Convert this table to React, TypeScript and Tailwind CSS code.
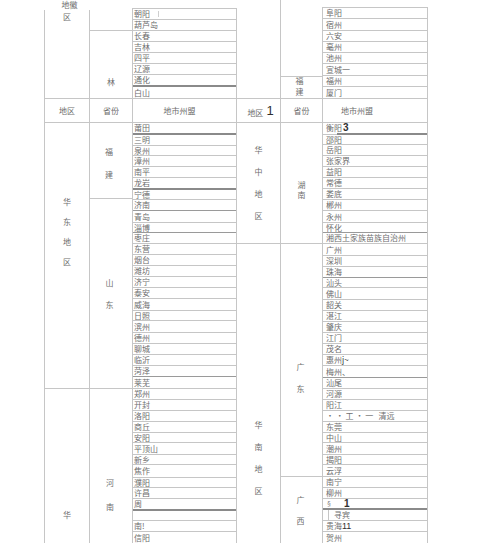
import React from "react";

type Row = { t: React.ReactNode; c: string };

const L = "border-[#c6c6c6]";
const h10 = "h-[10px] border-b border-[#c6c6c6]";
const h11 = "h-[11px] border-b border-[#c6c6c6]";
const h12 = "h-[12px] border-b border-[#c6c6c6]";
const h13 = "h-[13px] border-b border-[#c6c6c6]";
const d10 = "h-[10px] border-b border-[#9a9a9a]";
const d11 = "h-[11px] border-b border-[#9a9a9a]";
const d12 = "h-[12px] border-b border-[#9a9a9a]";
const t12 = "h-[12px] border-b-2 border-[#8a8a8a]";
const t11 = "h-[11px] border-b-2 border-[#8a8a8a]";

const Big = ({ children, cls }: { children: React.ReactNode; cls: string }) => (
  <span className={`font-['Liberation_Sans',sans-serif] text-[#2f2f2f] ${cls}`}>{children}</span>
);

const leftTop: Row[] = [
  {
    t: (
      <>
        朝阳<span className="ml-[8px] h-[6px] w-px bg-[#cfcfcf]" />
      </>
    ),
    c: h11,
  },
  { t: "葫芦岛", c: h11 },
  { t: "长春", c: h11 },
  { t: "吉林", c: h11 },
  { t: "四平", c: h11 },
  { t: "辽源", c: h11 },
  { t: "通化", c: t12 },
  { t: "白山", c: h12 },
];

const leftMain: Row[] = [
  { t: "莆田", c: t12 },
  { t: "三明", c: h11 },
  { t: "泉州", c: h10 },
  { t: "漳州", c: h11 },
  { t: "南平", c: h11 },
  { t: "龙岩", c: t12 },
  { t: "宁德", c: h10 },
  { t: "济南", c: d11 },
  { t: "青岛", c: h12 },
  { t: "淄博", c: d10 },
  { t: "枣庄", c: h11 },
  { t: "东营", c: h11 },
  { t: "烟台", c: h11 },
  { t: "潍坊", c: h11 },
  { t: "济宁", c: h11 },
  { t: "泰安", c: h11 },
  { t: "威海", c: h12 },
  { t: "日照", c: h10 },
  { t: "滨州", c: h12 },
  { t: "德州", c: h11 },
  { t: "聊城", c: h11 },
  { t: "临沂", c: h11 },
  { t: "菏泽", c: d11 },
  { t: "莱芜", c: h12 },
  { t: "郑州", c: h11 },
  { t: "开封", c: h11 },
  { t: "洛阳", c: h11 },
  { t: "商丘", c: h11 },
  { t: "安阳", c: h10 },
  { t: "平顶山", c: h12 },
  { t: "新乡", c: h10 },
  { t: "焦作", c: h13 },
  { t: "濮阳", c: h10 },
  { t: "许昌", c: h11 },
  { t: "周", c: t12 },
  { t: "", c: h10 },
  { t: "南!", c: h11 },
  { t: "信阳", c: "h-[11px]" },
];

const rightTop: Row[] = [
  { t: "阜阳", c: h11 },
  { t: "宿州", c: h12 },
  { t: "六安", c: h11 },
  { t: "亳州", c: h11 },
  { t: "池州", c: h11 },
  { t: "宣城一", c: h12 },
  { t: "福州", c: h11 },
  { t: "厦门", c: h12 },
];

const rightMain: Row[] = [
  { t: "__HENGYANG__", c: "h-[12px]" },
  { t: "邵阳", c: h10 },
  { t: "岳阳", c: h11 },
  { t: "张家界", c: h11 },
  { t: "益阳", c: h11 },
  { t: "常德", c: h11 },
  { t: "娄底", c: h11 },
  { t: "郴州", c: h11 },
  { t: "永州", c: h12 },
  { t: "怀化", c: d10 },
  { t: "湘西土家族苗族自治州", c: h11 },
  { t: "广州", c: h12 },
  { t: "深圳", c: h11 },
  { t: "珠海", c: d11 },
  { t: "汕头", c: h10 },
  { t: "佛山", c: h12 },
  { t: "韶关", c: h11 },
  { t: "湛江", c: h11 },
  { t: "肇庆", c: h11 },
  { t: "江门", c: h11 },
  { t: "茂名", c: h11 },
  {
    t: (
      <>
        惠州<span className="text-[#333]">j~</span>
      </>
    ),
    c: h11,
  },
  { t: "梅州、", c: d12 },
  { t: "汕尾", c: h11 },
  { t: "河源", c: h11 },
  { t: "阳江", c: h11 },
  { t: "__QINGYUAN__", c: h11 },
  { t: "东莞", c: h11 },
  { t: "中山", c: h10 },
  { t: "潮州", c: h12 },
  { t: "揭阳", c: h10 },
  { t: "云浮", c: h12 },
  { t: "南宁", c: h11 },
  { t: "柳州", c: h11 },
  { t: "__SECT__", c: t11 },
  { t: "__XUNBIN__", c: h11 },
  {
    t: (
      <>
        贵海<Big cls="text-[9px] leading-[8px]">11</Big>
      </>
    ),
    c: h11,
  },
  { t: "贺州", c: "h-[11px]" },
];

function Cell({ r, pad }: { r: Row; pad: string }) {
  if (r.t === "__HENGYANG__") {
    return (
      <div className="flex h-[12px] flex-col">
        <div className={`flex h-[10px] items-center ${pad}`}>
          衡阳<Big cls="ml-[1px] text-[10px] leading-[8px] font-semibold">3</Big>
        </div>
        <div className="flex h-[2px]">
          <div className={`w-[14px] border-b ${L}`} />
          <div className="flex-1 bg-[#8a8a8a]" />
        </div>
      </div>
    );
  }
  if (r.t === "__QINGYUAN__") {
    return (
      <div className={`flex items-start whitespace-pre pt-[1px] ${pad} ${r.c}`}>
        {"· · 工 · 一   清远"}
      </div>
    );
  }
  if (r.t === "__SECT__") {
    return (
      <div className={`flex items-center ${pad} ${r.c}`}>
        <span className="text-[6px]">§</span>
        <Big cls="ml-[12px] text-[10px] leading-[8px] font-bold">1</Big>
      </div>
    );
  }
  if (r.t === "__XUNBIN__") {
    return (
      <div className={`flex ${r.c}`}>
        <div className={`ml-[5px] flex items-center border-l pl-[5px] ${L}`}>寻宾</div>
      </div>
    );
  }
  return (
    <div className={`flex items-center overflow-hidden whitespace-nowrap ${pad} ${r.c}`}>
      {r.t}
    </div>
  );
}

function V({ chars, cls }: { chars: string[]; cls: string }) {
  return (
    <div className={`flex flex-col items-center ${cls}`}>
      {chars.map((c, i) => (
        <span key={i} className="block h-[8px] leading-[8px]">
          {c}
        </span>
      ))}
    </div>
  );
}

export default function App() {
  return (
    <div className="h-[552px] w-[500px] overflow-hidden bg-white font-['Noto_Sans_CJK_SC',sans-serif] text-[8px] leading-[8px] text-[#6e6e6e]">
      <div className="flex pl-[44px]">
        {/* LEFT HALF */}
        <div className="flex w-[45px] flex-col">
          <div className="flex h-[10px] justify-center pt-[1px] pl-[6px]">地徽</div>
          <div className={`h-[89px] border-b border-l ${L}`}>
            <V chars={["区"]} cls="pt-[3px]" />
          </div>
          <div className={`flex h-[24px] items-center justify-center border-b border-l ${L}`}>地区</div>
          <div className={`h-[266px] border-b border-l ${L}`}>
            <V chars={["华", "东", "地", "区"]} cls="pt-[75px] gap-[12px]" />
          </div>
          <div className={`h-[154px] border-l ${L}`}>
            <V chars={["华"]} cls="pt-[122px]" />
          </div>
        </div>

        <div className="flex w-[43px] flex-col">
          <div className="h-[10px]" />
          <div className={`h-[21px] border-b border-l ${L}`} />
          <div className={`h-[68px] border-b border-l ${L}`}>
            <V chars={["林"]} cls="pt-[47px]" />
          </div>
          <div className={`flex h-[24px] items-center justify-center border-b border-l ${L}`}>省份</div>
          <div className={`h-[76px] border-b border-l ${L}`}>
            <V chars={["福", "建"]} cls="pt-[25px] gap-[15px] pr-[4px]" />
          </div>
          <div className={`h-[190px] border-b border-l ${L}`}>
            <V chars={["山", "东"]} cls="pt-[80px] gap-[14px] pr-[3px]" />
          </div>
          <div className={`h-[154px] border-l ${L}`}>
            <V chars={["河", "南"]} cls="pt-[90px] gap-[16px] pr-[2px]" />
          </div>
        </div>

        <div className="flex w-[105px] flex-col">
          <div className="h-[8px]" />
          <div className={`flex flex-col border-l border-r border-t ${L}`}>
            {leftTop.map((r, i) => (
              <Cell key={i} r={r} pad="pl-[1px]" />
            ))}
            <div className={`flex h-[24px] items-center justify-center border-b pr-[10px] ${L}`}>地市州盟</div>
            {leftMain.map((r, i) => (
              <Cell key={i} r={r} pad="pl-[1px]" />
            ))}
          </div>
        </div>

        {/* RIGHT HALF */}
        <div className="flex w-[43px] flex-col">
          <div className={`h-[99px] border-b ${L}`} />
          <div className={`flex h-[24px] items-center justify-center gap-[3px] border-b pl-[4px] ${L}`}>
            <span className="mt-[4px]">地区</span>
            <Big cls="text-[13px] leading-[13px] font-light">1</Big>
          </div>
          <div className={`h-[121px] border-b ${L}`}>
            <V chars={["华", "中", "地", "区"]} cls="pt-[23px] gap-[14px]" />
          </div>
          <div className="h-[299px]">
            <V chars={["华", "南", "地", "区"]} cls="pt-[177px] gap-[14px]" />
          </div>
        </div>

        <div className="flex w-[42px] flex-col">
          <div className={`h-[77px] border-b border-l ${L}`} />
          <div className={`h-[22px] border-b border-l ${L}`}>
            <V chars={["福", "建"]} cls="pt-[0px] gap-[3px] pr-[4px]" />
          </div>
          <div className={`flex h-[24px] items-center justify-center border-b border-l ${L}`}>省份</div>
          <div className={`h-[121px] border-b border-l ${L}`}>
            <V chars={["湖", "南"]} cls="pt-[58px] gap-[2px]" />
          </div>
          <div className={`h-[233px] border-b border-l ${L}`}>
            <V chars={["广", "东"]} cls="pt-[119px] gap-[14px] pr-[2px]" />
          </div>
          <div className={`h-[66px] border-l ${L}`}>
            <V chars={["广", "西"]} cls="pt-[19px] gap-[13px] pr-[2px]" />
          </div>
        </div>

        <div className="flex w-[106px] flex-col">
          <div className="h-[7px]" />
          <div className={`flex flex-col border-l border-r border-t ${L}`}>
            {rightTop.map((r, i) => (
              <Cell key={i} r={r} pad="pl-[3px]" />
            ))}
            <div className={`flex h-[24px] items-center justify-center border-b pr-[36px] ${L}`}>地市州盟</div>
            {rightMain.map((r, i) => (
              <Cell key={i} r={r} pad="pl-[3px]" />
            ))}
          </div>
        </div>
      </div>
    </div>
  );
}
